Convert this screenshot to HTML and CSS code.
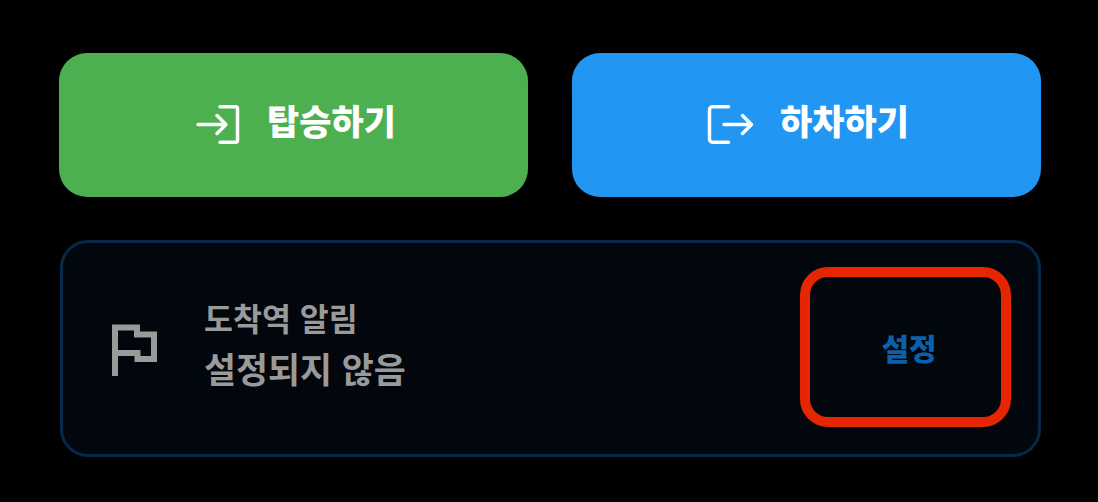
FILE: index.html
```html
<!DOCTYPE html>
<html lang="ko">
<head>
  <meta charset="UTF-8">
  <title>탑승 하차</title>
  <link rel="stylesheet" href="styles.css">
</head>
<body>
  <div class="actions">
    <button class="action board" type="button">
      <svg class="action-icon" width="46" height="40" viewBox="0 0 46 40" fill="none" stroke="#fff" stroke-width="3.5" stroke-linecap="round" stroke-linejoin="round">
        <path d="M2 19.5H29.5M21 10.5l9 9-9 9"/>
        <path d="M24 1.75H39.5a2 2 0 0 1 2 2V35.25a2 2 0 0 1-2 2H24"/>
      </svg>
      <span class="action-label">탑승하기</span>
    </button>
    <button class="action alight" type="button">
      <svg class="action-icon" width="46" height="40" viewBox="0 0 46 40" fill="none" stroke="#fff" stroke-width="3.5" stroke-linecap="round" stroke-linejoin="round">
        <path d="M19.5 1.75H3.5a3 3 0 0 0-3 3V34.25a3 3 0 0 0 3 3H19.5"/>
        <path d="M15 19.5H42M33.5 10.5l9 9-9 9"/>
      </svg>
      <span class="action-label">하차하기</span>
    </button>
  </div>

  <div class="alarm">
    <svg class="flag" width="48" height="54" viewBox="0 0 48 54" fill="none" stroke="#9a9a9a" stroke-width="6">
      <path d="M4 52V3.5H26V10.5H43V35H26.5V29H4"/>
    </svg>
    <div class="alarm-text">
      <div class="alarm-title">도착역 알림</div>
      <div class="alarm-value">설정되지 않음</div>
    </div>
    <button class="setting" type="button">설정</button>
  </div>
</body>
</html>
```

FILE: styles.css
```css
body {
  margin: 0;
  width: 1098px;
  height: 502px;
  overflow: hidden;
  background-color: #000;
  font-family: "Noto Sans CJK KR", "Noto Sans", sans-serif;
  padding: 53px 57px 0 59px;
  box-sizing: border-box;
}

button {
  font-family: inherit;
  border: none;
  cursor: pointer;
}

.actions {
  display: flex;
  gap: 44px;
  margin-bottom: 43px;
}

.action {
  flex: 1;
  height: 144px;
  border-radius: 28px;
  color: #fff;
  font-size: 35px;
  font-weight: 900;
  display: flex;
  align-items: center;
  justify-content: center;
  gap: 25px;
  padding: 0 0 0 5px;
}

.action-icon {
  overflow: visible;
}

.action-label {
  margin-bottom: 12px;
}

.board {
  background-color: #4caf50;
}

.alight {
  background-color: #2196f3;
}

.alarm {
  height: 217px;
  box-sizing: border-box;
  margin-left: 1px;
  border: 3px solid #06284a;
  border-radius: 28px;
  background-color: #01070d;
  display: flex;
  align-items: center;
  padding: 0 27px 0 48px;
}

.flag {
  margin: 5px 45px 0 0;
}

.alarm-text {
  flex: 1;
  color: #9a9a9a;
  font-weight: 700;
  padding-bottom: 12px;
}

.alarm-title {
  font-size: 31.5px;
  line-height: 50px;
}

.alarm-value {
  font-size: 34.8px;
  line-height: 52px;
}

.setting {
  width: 211px;
  height: 160px;
  margin-bottom: 4px;
  padding: 0 0 0 7px;
  border: 10px solid #e62600;
  border-radius: 28px;
  background-color: #01070d;
  color: #0a60aa;
  font-size: 30px;
  font-weight: 900;
}
```
